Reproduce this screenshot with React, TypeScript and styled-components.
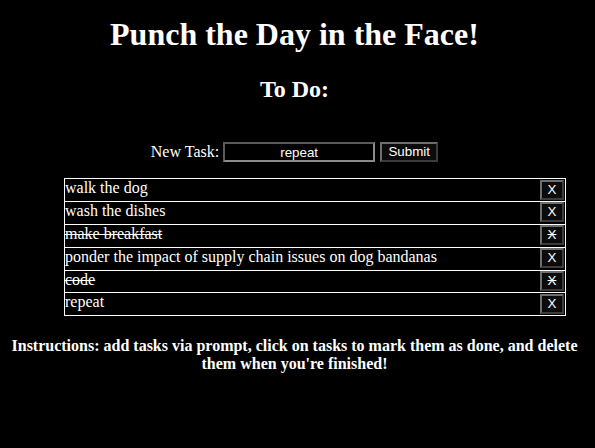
import React, { useState } from "react";
import styled, { createGlobalStyle } from "styled-components";

const Global = createGlobalStyle`
  html, body { margin: 0; padding: 0; background: #000; }
  body { color: #fff; font-family: "Liberation Serif", "Times New Roman", serif; }
`;

const Page = styled.div`
  padding: 0 14px 0 8px;
  text-align: center;
  min-height: 448px;
  box-sizing: border-box;
  overflow: hidden;
`;

const Title = styled.h1`
  margin: 16px 0 0;
  font-size: 32px;
  line-height: 36.8px;
  font-weight: bold;
`;

const Subtitle = styled.h2`
  margin: 23px 0 0;
  font-size: 24px;
  line-height: 27.6px;
  font-weight: bold;
`;

const Form = styled.form`
  margin: 39px 0 0;
  display: flex;
  justify-content: center;
  align-items: center;
  height: 20px;
  font-size: 16px;
`;

const Label = styled.label`
  margin-right: 4px;
  line-height: 18.4px;
`;

const Input = styled.input`
  box-sizing: border-box;
  width: 152px;
  height: 20px;
  padding: 0 4px;
  background: #000;
  color: #fff;
  border: 2px solid;
  border-color: #5a5a5a #8a8a8a #8a8a8a #5a5a5a;
  font-family: "Liberation Sans", Arial, sans-serif;
  font-size: 13.33px;
  text-align: center;
  outline: none;
`;

const Button = styled.button<{ $done?: boolean }>`
  box-sizing: border-box;
  height: 20px;
  padding: 0 6px;
  background: #0b0b0b;
  color: #fff;
  border: 2px solid;
  border-color: #6e6e6e #3c3c3c #3c3c3c #6e6e6e;
  font-family: "Liberation Sans", Arial, sans-serif;
  font-size: 13.33px;
  line-height: 16px;
  text-decoration: ${(p) => (p.$done ? "line-through" : "none")};
  cursor: pointer;
`;

const SubmitButton = styled(Button)`
  margin-left: 5px;
  width: 58px;
`;

const List = styled.ul`
  list-style: none;
  margin: 16px 0 0 56px;
  padding: 0;
  width: 502px;
  box-sizing: border-box;
  border-top: 1px solid #fff;
  text-align: left;
`;

const Row = styled.li<{ $done: boolean }>`
  display: flex;
  justify-content: space-between;
  align-items: flex-start;
  height: 22.8px;
  box-sizing: border-box;
  border: 1px solid #fff;
  border-top: none;
  font-size: 16px;
  line-height: 18.4px;
  cursor: pointer;
`;

const Task = styled.span<{ $done: boolean }>`
  text-decoration: ${(p) => (p.$done ? "line-through" : "none")};
`;

const DeleteButton = styled(Button)`
  width: 24px;
  padding: 0;
  margin: 0.3px 1px 0 0;
`;

const Instructions = styled.h4`
  margin: 20.5px 0 0;
  font-size: 16px;
  line-height: 18.4px;
  font-weight: bold;
`;

type Item = { text: string; done: boolean };

export default function App() {
  const [items, setItems] = useState<Item[]>([
    { text: "walk the dog", done: false },
    { text: "wash the dishes", done: false },
    { text: "make breakfast", done: true },
    { text: "ponder the impact of supply chain issues on dog bandanas", done: false },
    { text: "code", done: true },
    { text: "repeat", done: false },
  ]);
  const [value, setValue] = useState("repeat");

  return (
    <>
      <Global />
      <Page>
        <Title>Punch the Day in the Face!</Title>
        <Subtitle>To Do:</Subtitle>
        <Form
          onSubmit={(e) => {
            e.preventDefault();
            if (value.trim()) setItems([...items, { text: value, done: false }]);
          }}
        >
          <Label htmlFor="task">New Task:</Label>
          <Input id="task" value={value} onChange={(e) => setValue(e.target.value)} />
          <SubmitButton type="submit">Submit</SubmitButton>
        </Form>
        <List>
          {items.map((it, i) => (
            <Row
              key={i}
              $done={it.done}
              onClick={() =>
                setItems(items.map((x, j) => (j === i ? { ...x, done: !x.done } : x)))
              }
            >
              <Task $done={it.done}>{it.text}</Task>
              <DeleteButton
                $done={it.done}
                onClick={(e) => {
                  e.stopPropagation();
                  setItems(items.filter((_, j) => j !== i));
                }}
              >
                X
              </DeleteButton>
            </Row>
          ))}
        </List>
        <Instructions>
          Instructions: add tasks via prompt, click on tasks to mark them as done, and delete
          them when you're finished!
        </Instructions>
      </Page>
    </>
  );
}
